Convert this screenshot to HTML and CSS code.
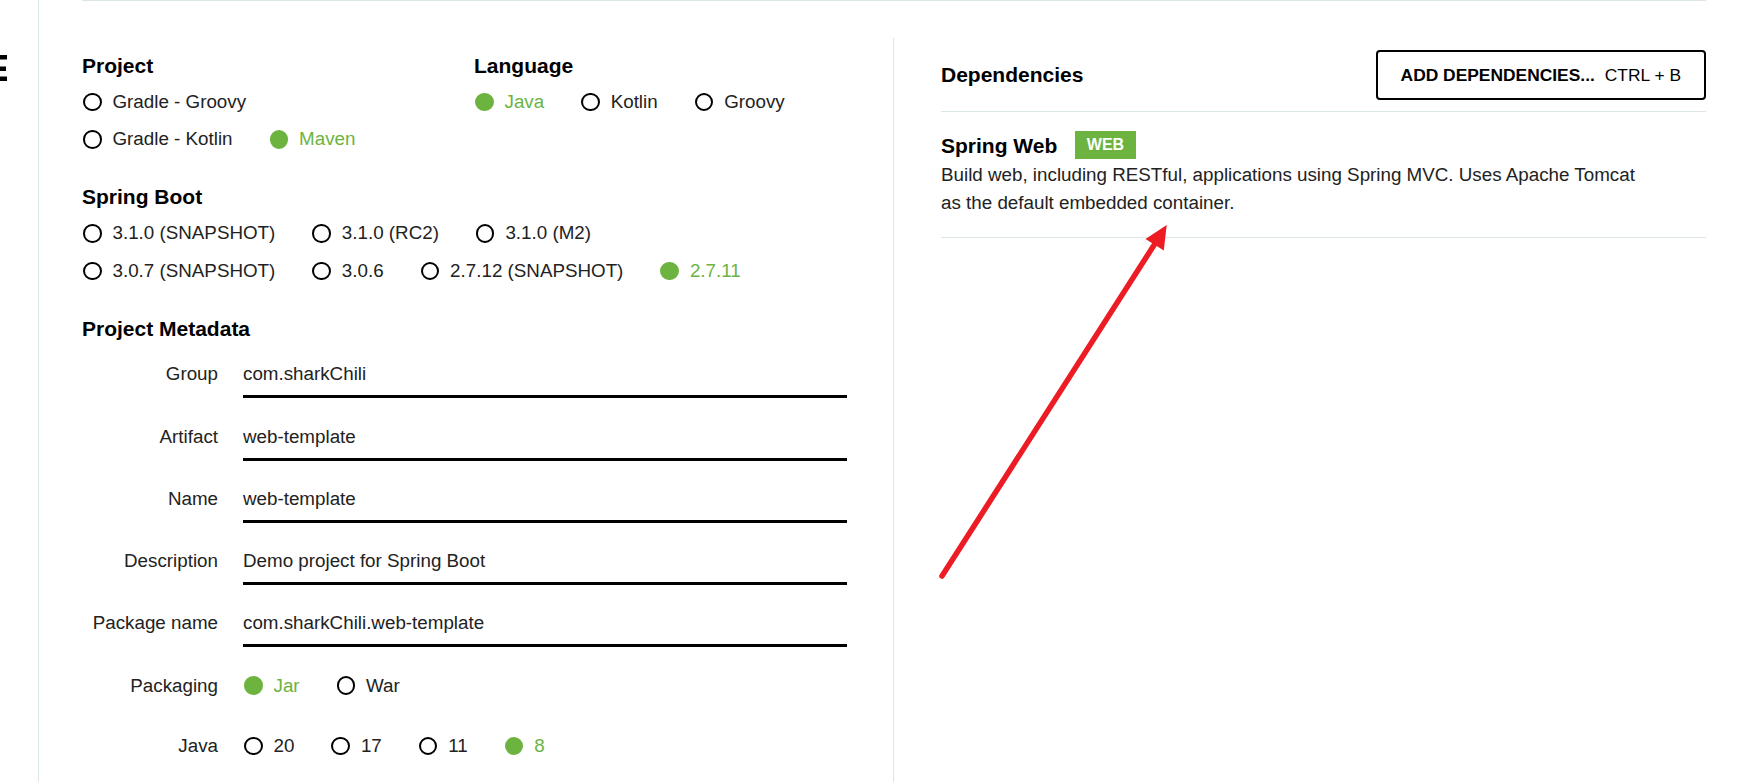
FILE: index.html
```html
<!DOCTYPE html>
<html lang="en">
<head>
	<meta charset="UTF-8">
	<title>Spring Initializr</title>
	<link rel="stylesheet" href="styles.css">
</head>
<body>

	<div class="page">
		<!-- 左侧窄栏，只露出菜单图标的一角 -->
		<aside class="rail">
			<svg class="menu" width="8" height="27" viewBox="0 0 8 27">
				<rect x="0" y="0" width="7" height="4.5" fill="#000"/>
				<rect x="0" y="11.5" width="6" height="4.5" fill="#000"/>
				<rect x="0" y="21.5" width="7" height="4.5" fill="#000"/>
			</svg>
		</aside>

		<main class="main">
			<div class="cols">

				<section class="col-left">
					<div class="top-pair">
						<div class="group">
							<h2>Project</h2>
							<div class="radio-row">
								<label class="radio"><span class="dot"></span>Gradle - Groovy</label>
							</div>
							<div class="radio-row">
								<label class="radio"><span class="dot"></span>Gradle - Kotlin</label>
								<label class="radio checked"><span class="dot"></span>Maven</label>
							</div>
						</div>
						<div class="group">
							<h2>Language</h2>
							<div class="radio-row">
								<label class="radio checked"><span class="dot"></span>Java</label>
								<label class="radio"><span class="dot"></span>Kotlin</label>
								<label class="radio"><span class="dot"></span>Groovy</label>
							</div>
						</div>
					</div>

					<div class="group block">
						<h2>Spring Boot</h2>
						<div class="radio-row">
							<label class="radio"><span class="dot"></span>3.1.0 (SNAPSHOT)</label>
							<label class="radio"><span class="dot"></span>3.1.0 (RC2)</label>
							<label class="radio"><span class="dot"></span>3.1.0 (M2)</label>
						</div>
						<div class="radio-row">
							<label class="radio"><span class="dot"></span>3.0.7 (SNAPSHOT)</label>
							<label class="radio"><span class="dot"></span>3.0.6</label>
							<label class="radio"><span class="dot"></span>2.7.12 (SNAPSHOT)</label>
							<label class="radio checked"><span class="dot"></span>2.7.11</label>
						</div>
					</div>

					<div class="group block">
						<h2 class="meta-title">Project Metadata</h2>
						<div class="fields">
							<div class="field">
								<span class="field-label">Group</span>
								<input class="text" type="text" value="com.sharkChili">
							</div>
							<div class="field">
								<span class="field-label">Artifact</span>
								<input class="text" type="text" value="web-template">
							</div>
							<div class="field">
								<span class="field-label">Name</span>
								<input class="text" type="text" value="web-template">
							</div>
							<div class="field">
								<span class="field-label">Description</span>
								<input class="text" type="text" value="Demo project for Spring Boot">
							</div>
							<div class="field">
								<span class="field-label">Package name</span>
								<input class="text" type="text" value="com.sharkChili.web-template">
							</div>
							<div class="field field-radio">
								<span class="field-label">Packaging</span>
								<div class="radio-row">
									<label class="radio checked"><span class="dot"></span>Jar</label>
									<label class="radio"><span class="dot"></span>War</label>
								</div>
							</div>
							<div class="field field-radio">
								<span class="field-label">Java</span>
								<div class="radio-row">
									<label class="radio"><span class="dot"></span>20</label>
									<label class="radio"><span class="dot"></span>17</label>
									<label class="radio"><span class="dot"></span>11</label>
									<label class="radio checked"><span class="dot"></span>8</label>
								</div>
							</div>
						</div>
					</div>
				</section>

				<section class="col-right">
					<div class="deps-head">
						<h2>Dependencies</h2>
						<button class="add-btn" type="button"><strong>ADD DEPENDENCIES...</strong><span>CTRL + B</span></button>
					</div>
					<div class="dep">
						<div class="dep-title">
							<h3>Spring Web</h3>
							<span class="badge">WEB</span>
						</div>
						<p class="dep-desc">Build web, including RESTful, applications using Spring MVC. Uses Apache Tomcat as the default embedded container.</p>
					</div>
				</section>

			</div>
		</main>
	</div>

	<!-- 截图上加的红色箭头 -->
	<svg class="arrow" width="1747" height="782" viewBox="0 0 1747 782">
		<line x1="942" y1="576" x2="1156" y2="242" stroke="#ed1c24" stroke-width="5.5" stroke-linecap="round"/>
		<polygon points="1166.7,225 1145.5,239 1163.8,250.5" fill="#ed1c24"/>
	</svg>

</body>
</html>
```

FILE: styles.css
```css
/* 整体：左窄栏 + 主体两栏 */
* {
	box-sizing: border-box;
}

body {
	margin: 0;
	font-family: "Liberation Sans", Arial, Helvetica, sans-serif;
	font-size: 18.8px;
	color: #222;
	background: #fff;
}

.page {
	display: flex;
	height: 782px;
	overflow: hidden;
}

.rail {
	width: 39px;
	flex-shrink: 0;
	border-right: 1px solid #dde6e6;
	padding-top: 55px;
}
.menu {
	display: block;
}

.main {
	flex: 1;
	display: flex;
	flex-direction: column;
	padding: 0 41px 0 43px;
}

.cols {
	flex: 1;
	display: flex;
	border-top: 1px solid #dde6e6;
	padding-top: 37px;
}

h2 {
	margin: 0;
	font-size: 21px;
	line-height: 23px;
	font-weight: bold;
	color: #000;
}

/* 左栏 */
.col-left {
	width: 812px;
	flex-shrink: 0;
	border-right: 1px solid #dde6e6;
	padding: 15.5px 46.5px 0 0;
}

.top-pair {
	display: grid;
	grid-template-columns: 392px 1fr;
	align-items: start;
}

.group h2 {
	margin-bottom: 6.5px;
}
.block {
	margin-top: 27px;
}

.radio-row {
	display: flex;
	align-items: center;
	gap: 37px;
	height: 37.5px;
	padding-left: 1px;
}

.radio {
	display: inline-flex;
	align-items: center;
	gap: 11px;
	white-space: nowrap;
}
.dot {
	width: 18.5px;
	height: 18.5px;
	border: 2px solid #000;
	border-radius: 50%;
}
.radio.checked {
	color: #6db33f;
}
.radio.checked .dot {
	border-color: #6db33f;
	background: #6db33f;
}

/* 元数据表单 */
.group .meta-title {
	margin-bottom: 22.8px;
}

.fields {
	display: flex;
	flex-direction: column;
	gap: 26.25px;
}

.field {
	display: grid;
	grid-template-columns: 136px 1fr;
	column-gap: 25px;
	align-items: start;
}

.field-label {
	text-align: right;
	line-height: 24px;
	color: #222;
}

.text {
	width: 100%;
	height: 36px;
	padding: 0 0 9px 0;
	border: 0;
	border-bottom: 3px solid #000;
	border-radius: 0;
	font: inherit;
	color: #222;
	background: transparent;
	outline: none;
}

.field-radio {
	align-items: center;
	height: 24px;
}
.field-radio .radio-row {
	height: 24px;
}
.field-radio + .field-radio {
	margin-top: 10px;
}

/* 右栏：依赖 */
.col-right {
	flex: 1;
	padding: 12px 0 0 47px;
}

.deps-head {
	display: flex;
	justify-content: space-between;
	align-items: center;
	padding-bottom: 11px;
	border-bottom: 1px solid #dde6e6;
}
.deps-head h2 {
	margin-top: -2px;
}

.add-btn {
	display: flex;
	align-items: center;
	gap: 10px;
	height: 50px;
	padding: 0 23px;
	border: 2px solid #000;
	border-radius: 4px;
	background: #fff;
	font-family: inherit;
	font-size: 17.4px;
	color: #000;
}
.add-btn strong {
	font-weight: bold;
}

.dep {
	padding: 19px 0 19.6px;
	border-bottom: 1px solid #dde6e6;
}

.dep-title {
	display: flex;
	align-items: center;
	gap: 18px;
	height: 28px;
}
.dep-title h3 {
	margin: 0;
	font-size: 21px;
	line-height: 25px;
	color: #000;
}

.badge {
	padding: 0 11.5px;
	background: #6db33f;
	color: #fff;
	font-size: 16px;
	font-weight: bold;
	line-height: 28px;
}

.dep-desc {
	margin: 2px 0 0;
	max-width: 712px;
	line-height: 28.3px;
	color: #222;
}

/* 标注箭头，盖在页面上面 */
.arrow {
	position: absolute;
	left: 0;
	top: 0;
	pointer-events: none;
}
```
